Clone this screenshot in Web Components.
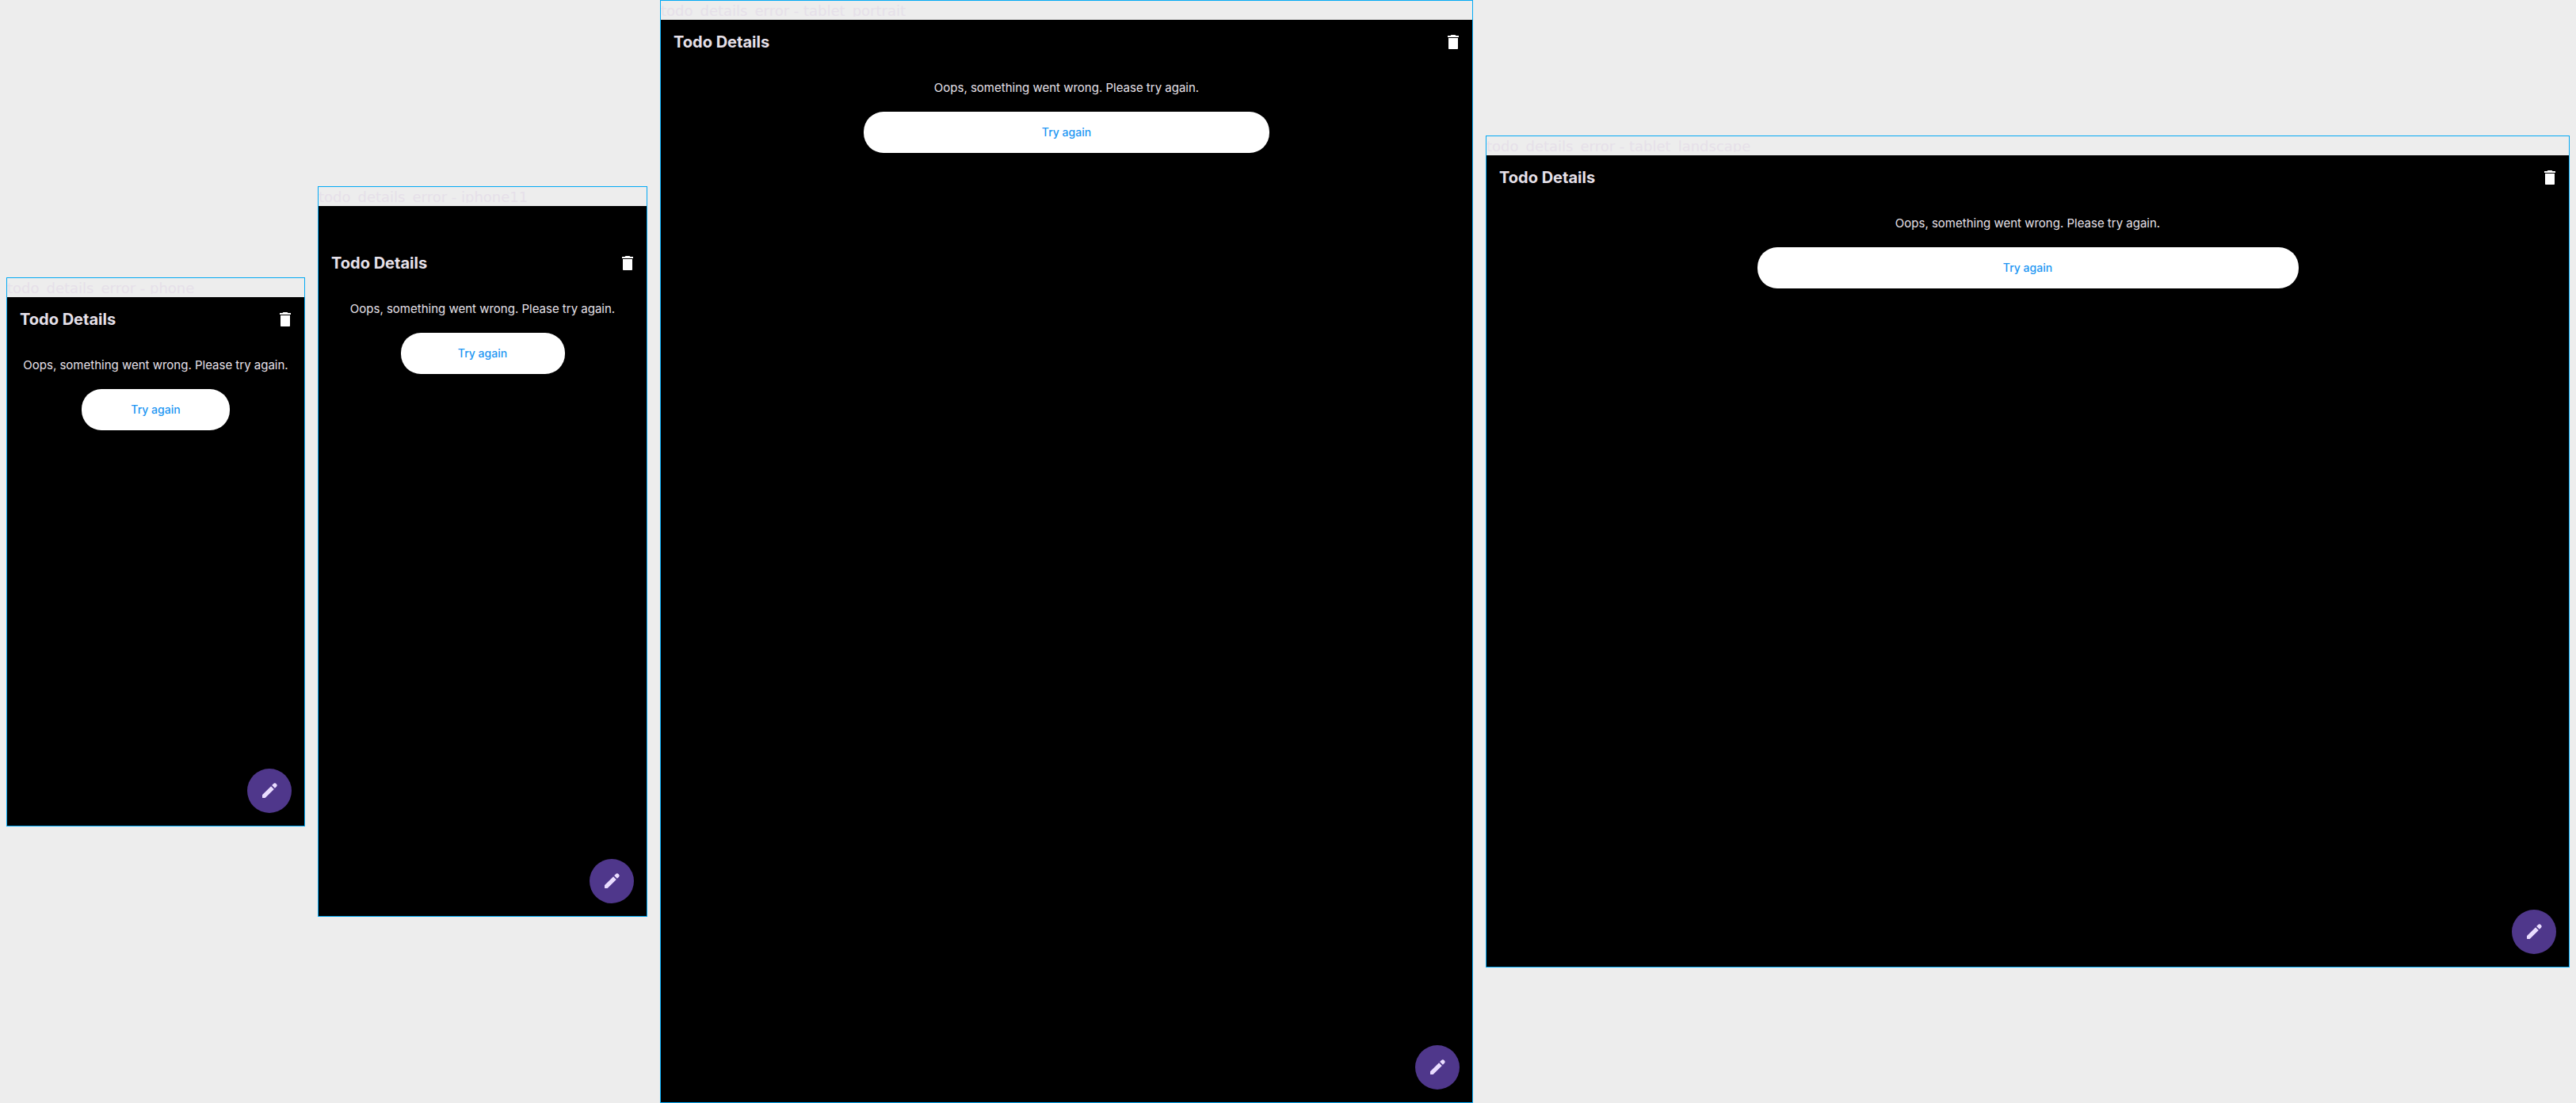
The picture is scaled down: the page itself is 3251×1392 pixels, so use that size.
<!DOCTYPE html>
<html lang="en">
<head>
<meta charset="utf-8">
<title>Todo details error</title>
<style>
html { height: 100%; }
body { margin: 0; min-height: 100%; background: #ededed; font-family: Inter, "Open Sans", sans-serif; }
</style>
</head>
<body>
<device-board>
  <device-frame label="todo_details_error - phone" style="--w:375;--h:667"><todo-error-screen></todo-error-screen></device-frame>
  <device-frame label="todo_details_error - iphone11" style="--w:414;--h:896;--safe-top:44px"><todo-error-screen></todo-error-screen></device-frame>
  <device-frame label="todo_details_error - tablet_portrait" style="--w:1024;--h:1366"><todo-error-screen></todo-error-screen></device-frame>
  <device-frame label="todo_details_error - tablet_landscape" style="--w:1366;--h:1024"><todo-error-screen></todo-error-screen></device-frame>
</device-board>
<script>
class BaseElement extends HTMLElement {
  connectedCallback() {
    if (!this.shadowRoot) this.attachShadow({ mode: "open" }).innerHTML = this.render();
  }
}

customElements.define("device-board", class extends BaseElement {
  render() {
    return `<style>
      :host { display: flex; align-items: center; gap: 16px; padding: 0 8px; }
    </style><slot></slot>`;
  }
});

customElements.define("device-frame", class extends BaseElement {
  render() {
    return `<style>
      :host { display: block; flex: var(--w) 1 0; min-width: 0; border: 1px solid #03a9f4; }
      .label { height: 20px; margin-bottom: 4px; overflow: hidden; white-space: nowrap; font: 18px/26px "DejaVu Sans", sans-serif; color: #e6e0e9; }
      .screen { aspect-ratio: var(--w) / var(--h); display: flex; background: #000; }
    </style>
    <div class="label">${this.getAttribute("label")}</div>
    <div class="screen"><slot></slot></div>`;
  }
});

customElements.define("app-bar", class extends BaseElement {
  render() {
    return `<style>
      :host { display: flex; align-items: center; justify-content: space-between; height: 56px; padding-left: 16px; color: #e6e0e9; }
      h1 { margin: 0; font-size: 20px; line-height: 28px; font-weight: 700; }
      button { display: grid; place-items: center; width: 48px; height: 48px; padding: 0; border: 0; background: none; color: #fff; }
    </style>
    <h1><slot></slot></h1>
    <button type="button" aria-label="Delete">
      <svg width="24" height="24" viewBox="0 0 24 24" fill="currentColor"><path d="M6 20.200c0 .5.300.8.8.8h10.400c.5 0 .8-.3.8-.8V7H6v13.200zM19 4h-3.500l-1-1h-5l-1 1H5v2h14V4z"/></svg>
    </button>`;
  }
});

customElements.define("error-message", class extends BaseElement {
  render() {
    return `<style>
      :host { display: flex; flex-direction: column; align-items: center; gap: 20px; padding-top: 20px; }
      p { margin: 0; font-size: 15px; line-height: 20px; color: #e6e0e9; white-space: nowrap; }
      button { width: 50%; height: 52px; padding: 0; border: 0; border-radius: 25px; background: #fff; color: #2196f3; font: 500 14px/20px Inter, "Open Sans", sans-serif; }
    </style>
    <p><slot></slot></p>
    <button type="button">Try again</button>`;
  }
});

customElements.define("edit-fab", class extends BaseElement {
  render() {
    return `<style>
      :host { display: block; margin: auto 16px 16px auto; }
      button { display: grid; place-items: center; width: 56px; height: 56px; padding: 0; border: 0; border-radius: 50%; background: #4f378b; color: #eaddff; }
    </style>
    <button type="button" aria-label="Edit">
      <svg width="24" height="24" viewBox="0 0 24 24" fill="currentColor"><path d="M3 17.460v3.040c0 .28.22.5.5.5h3.040c.13 0 .26-.05.350-.15L17.810 9.940l-3.750-3.750L3.150 17.100c-.1.1-.15.220-.15.360z"/><path d="M20.710 7.040a2.600 2.600 0 0 0 0-3.750 2.600 2.600 0 0 0-3.750 0l-1.830 1.830 3.750 3.750 1.830-1.830z"/></svg>
    </button>`;
  }
});

customElements.define("todo-error-screen", class extends BaseElement {
  render() {
    return `<style>
      :host { display: flex; flex-direction: column; flex: 1; min-width: 0; padding-top: var(--safe-top, 0); box-sizing: border-box; }
    </style>
    <app-bar>Todo Details</app-bar>
    <error-message>Oops, something went wrong. Please try again.</error-message>
    <edit-fab></edit-fab>`;
  }
});
</script>
</body>
</html>
